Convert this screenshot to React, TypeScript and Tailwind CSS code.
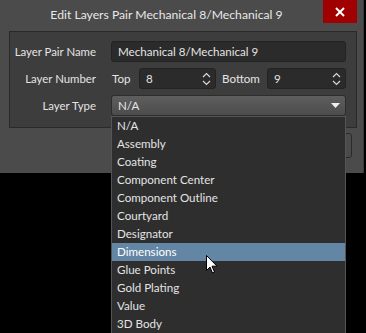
import React from "react";

const items = [
  "N/A",
  "Assembly",
  "Coating",
  "Component Center",
  "Component Outline",
  "Courtyard",
  "Designator",
  "Dimensions",
  "Glue Points",
  "Gold Plating",
  "Value",
  "3D Body",
];

function Spin() {
  return (
    <svg width="9" height="16" viewBox="0 0 9 16" className="shrink-0">
      <path d="M1 6 L4.5 2.5 L8 6" fill="none" stroke="#d8d8d8" strokeWidth="1.2" />
      <path d="M1 10 L4.5 13.5 L8 10" fill="none" stroke="#d8d8d8" strokeWidth="1.2" />
    </svg>
  );
}

export default function App() {
  return (
    <div
      className="relative w-[366px] h-[333px] bg-black overflow-hidden text-[11.6px] text-[#e4e4e4] whitespace-nowrap"
      style={{ fontFamily: 'Lato, "Noto Sans", sans-serif' }}
    >
      <div className="w-[364px] h-[173px] bg-[#4b4b4b] border-r border-[#3a3a3a] flex flex-col">
        <div className="relative h-[31px] flex items-start">
          <div className="w-[323px] pl-[10px] h-[31px] flex items-center justify-center text-[12.2px] text-[#e8e8e8] pb-[1px]">
            Edit Layers Pair Mechanical 8/Mechanical 9
          </div>
          <div className="w-[34px] h-[23px] bg-[#a00000] flex items-center justify-center">
            <svg width="10" height="10" viewBox="0 0 10 10">
              <path d="M1 1 L9 9 M9 1 L1 9" stroke="#ffffff" strokeWidth="2" />
            </svg>
          </div>
        </div>
        <div className="ml-[9px] w-[348px] h-[97px] border border-[#2a2a2a] bg-[#3d3d3d] pt-[9px] flex flex-col gap-[6px]">
          <div className="flex items-center h-[21px]">
            <div className="w-[86px] text-right text-[11.4px]">Layer Pair Name</div>
            <div className="ml-[15px] w-[235px] h-[21px] bg-[#2b2b2b] border border-[#232323] rounded-[3px] flex items-center pl-[6px]">
              Mechanical 8/Mechanical 9
            </div>
          </div>
          <div className="flex items-center h-[21px]">
            <div className="w-[86px] text-right text-[11.4px]">Layer Number</div>
            <div className="ml-[16px] w-[27px]">Top</div>
            <div className="w-[77px] h-[21px] bg-[#2b2b2b] border border-[#232323] rounded-[3px] flex items-center justify-between pl-[6px] pr-[4px]">
              <span>8</span>
              <Spin />
            </div>
            <div className="ml-[6px] w-[45px]">Bottom</div>
            <div className="w-[79px] h-[21px] bg-[#2b2b2b] border border-[#232323] rounded-[3px] flex items-center justify-between pl-[6px] pr-[4px]">
              <span>9</span>
              <Spin />
            </div>
          </div>
          <div className="flex items-center h-[21px]">
            <div className="w-[86px] text-right text-[11.4px]">Layer Type</div>
            <div className="ml-[15px] w-[235px] h-[21px] bg-gradient-to-b from-[#5e5e5e] to-[#4c4c4c] border border-[#2d2d2d] rounded-[3px] flex items-center justify-between pl-[6px] pr-[5px]">
              <span>N/A</span>
              <svg width="9" height="5" viewBox="0 0 9 5">
                <path d="M0 0 L9 0 L4.5 5 Z" fill="#f0f0f0" />
              </svg>
            </div>
          </div>
        </div>
        <div className="flex justify-end pr-[11px] mt-[5px]">
          <div className="w-[70px] h-[25px] border border-[#2a2a2a] rounded-[3px] bg-[#4b4b4b]" />
        </div>
      </div>

      <div className="absolute left-[111px] top-[116px] w-[235px] bg-[#2e2e2e] border border-[#555555]">
        {items.map((it) => (
          <div
            key={it}
            className={
              "h-[18px] flex items-center pl-[5px] " +
              (it === "Dimensions" ? "bg-[#6386a5] text-white" : "")
            }
          >
            {it}
          </div>
        ))}
      </div>

      <svg
        className="absolute left-[206px] top-[255px]"
        width="12"
        height="19"
        viewBox="0 0 12 19"
      >
        <path
          d="M0.5 0.5 L0.5 15.5 L4 12 L6.5 18 L8.5 17 L6 11.2 L11 11.2 Z"
          fill="#ffffff"
          stroke="#000000"
          strokeWidth="1"
        />
      </svg>
    </div>
  );
}
